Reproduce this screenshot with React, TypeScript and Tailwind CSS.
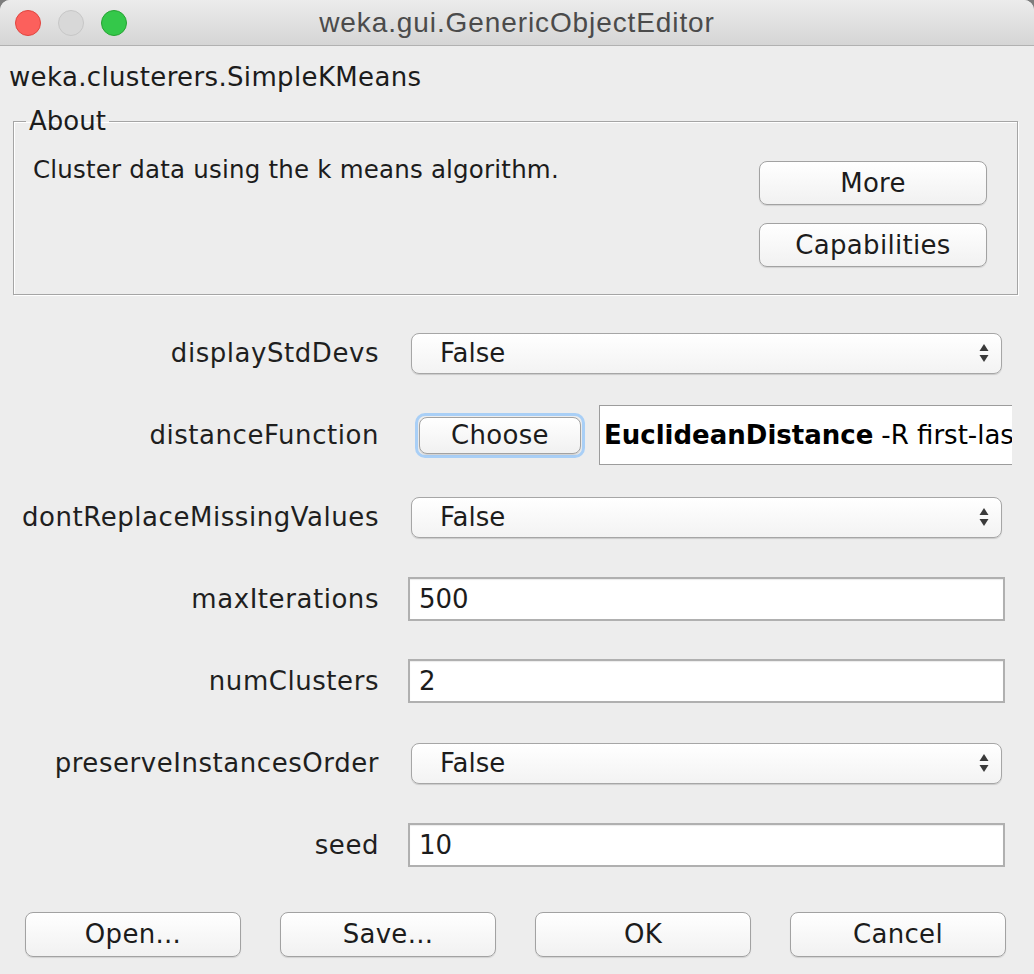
import type { ReactNode } from 'react'

function MacButton({ children, className = '' }: { children: ReactNode; className?: string }) {
  return (
    <button
      type="button"
      className={`flex items-center justify-center rounded-[8px] border border-[#a2a2a2] bg-gradient-to-b from-white to-[#f1f1f1] text-[26px] tracking-[0.3px] text-[#1c1c1c] shadow-[0_1px_1px_rgba(0,0,0,0.12)] ${className}`}
    >
      {children}
    </button>
  )
}

function Arrows() {
  return (
    <svg width="10" height="20" viewBox="0 0 10 20" className="text-[#3a3a3a]">
      <path d="M5 1 L9.5 8 L0.5 8 Z" fill="currentColor" />
      <path d="M5 19 L9.5 12 L0.5 12 Z" fill="currentColor" />
    </svg>
  )
}

function Combo({ value }: { value: string }) {
  return (
    <div className="mx-[3px] flex h-[41px] items-center justify-between rounded-[8px] border border-[#a6a6a6] bg-gradient-to-b from-white to-[#f3f3f3] pl-[28px] pr-[12px] shadow-[0_1px_1px_rgba(0,0,0,0.15)]">
      <span className="text-[26px] text-[#1c1c1c]">{value}</span>
      <Arrows />
    </div>
  )
}

function TextField({ value }: { value: string }) {
  return (
    <div className="flex h-[44px] items-center border-2 border-[#b0b0b0] bg-white pl-[9px] shadow-[inset_0_1px_1px_rgba(0,0,0,0.08)]">
      <span className="text-[26px] text-[#1c1c1c]">{value}</span>
    </div>
  )
}

function Row({ label, children }: { label: string; children: ReactNode }) {
  return (
    <div className="grid h-[82px] grid-cols-[379px_597px] items-center gap-x-[29px]">
      <span className="whitespace-nowrap text-right text-[26px] tracking-[0.55px] text-[#1f1f1f]">{label}</span>
      {children}
    </div>
  )
}

export default function App() {
  return (
    <div className="h-[974px] w-[1034px] overflow-hidden bg-[#7d7d7d]">
      <div className="flex h-full flex-col overflow-hidden rounded-t-[10px] bg-[#ededed] font-['DejaVu_Sans',sans-serif]">
        {/* title bar */}
        <div className="grid h-[46px] shrink-0 grid-cols-[1fr_auto_1fr] items-center border-b border-[#b1b1b1] bg-gradient-to-b from-[#ececec] to-[#d5d5d5]">
          <div className="flex items-center gap-[17px] pl-[15px]">
            <span className="h-[26px] w-[26px] rounded-full border border-[#e0443e] bg-[#fc605c]" />
            <span className="h-[26px] w-[26px] rounded-full border border-[#c6c6c6] bg-[#d8d8d8]" />
            <span className="h-[26px] w-[26px] rounded-full border border-[#25a332] bg-[#34c84a]" />
          </div>
          <span className="font-['Liberation_Sans',sans-serif] text-[28px] tracking-[0.9px] text-[#4b4b4b]">
            weka.gui.GenericObjectEditor
          </span>
          <div />
        </div>

        <div className="pl-[9px] pt-[16px] text-[26px] leading-[30px] tracking-[0.35px] text-[#1c1c1c]">
          weka.clusterers.SimpleKMeans
        </div>

        {/* About box */}
        <fieldset className="ml-[13px] mt-[15px] w-[1005px] border border-[#a5a5a5] p-0 shadow-[1px_1px_0_#ffffff,inset_1px_1px_0_#ffffff]">
          <legend className="ml-[12px] px-[3px] text-[26px] leading-[28px] text-[#1c1c1c]">About</legend>
          <div className="flex items-start justify-between pb-[27px] pl-[19px] pr-[30px]">
            <p className="pt-[20px] text-[24.5px] leading-[30px] tracking-[0.2px] text-[#1c1c1c]">
              Cluster data using the k means algorithm.
            </p>
            <div className="flex flex-col gap-[18px] pt-[26px]">
              <MacButton className="h-[44px] w-[228px]">More</MacButton>
              <MacButton className="h-[44px] w-[228px]">Capabilities</MacButton>
            </div>
          </div>
        </fieldset>

        {/* properties */}
        <div className="mt-[17px] flex flex-col">
          <Row label="displayStdDevs">
            <Combo value="False" />
          </Row>
          <Row label="distanceFunction">
            <div className="flex items-center">
              <div className="ml-[7px] shrink-0 rounded-[10px] border-[3px] border-[#a9cff6] p-px">
                <MacButton className="h-[37px] w-[162px] border-[#7fa9d8]">Choose</MacButton>
              </div>
              <div className="ml-[14px] flex h-[60px] w-[413px] shrink-0 items-center overflow-hidden whitespace-nowrap border-y border-l border-[#9c9c9c] bg-white pl-[4px] text-[26px] text-black">
                <span className="font-bold">EuclideanDistance</span>
                <span className="ml-[8px]">-R first-last</span>
              </div>
            </div>
          </Row>
          <Row label="dontReplaceMissingValues">
            <Combo value="False" />
          </Row>
          <Row label="maxIterations">
            <TextField value="500" />
          </Row>
          <Row label="numClusters">
            <TextField value="2" />
          </Row>
          <Row label="preserveInstancesOrder">
            <Combo value="False" />
          </Row>
          <Row label="seed">
            <TextField value="10" />
          </Row>
        </div>

        {/* bottom buttons */}
        <div className="mt-[26px] flex gap-[39px] pl-[25px]">
          <MacButton className="h-[45px] w-[216px]">Open...</MacButton>
          <MacButton className="h-[45px] w-[216px]">Save...</MacButton>
          <MacButton className="h-[45px] w-[216px]">OK</MacButton>
          <MacButton className="h-[45px] w-[216px]">Cancel</MacButton>
        </div>
      </div>
    </div>
  )
}
